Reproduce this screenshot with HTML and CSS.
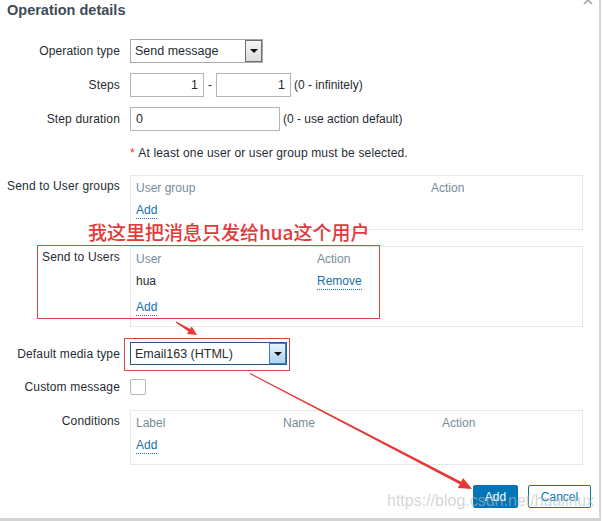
FILE: index.html
```html
<!DOCTYPE html>
<html>
<head>
<meta charset="utf-8">
<link rel="stylesheet" href="styles.css">
</head>
<body>
<div class="dialog">
  <h1 class="title">Operation details</h1>
  <span class="close"><svg width="10" height="10" viewBox="0 0 10 10"><path d="M1 1 L9 9 M9 1 L1 9" stroke="#aab4bb" stroke-width="2" fill="none"/></svg></span>

  <div class="form">
    <div class="row">
      <div class="lbl">Operation type</div>
      <div class="val">
        <div class="select sel-gray"><span class="sel-text">Send message</span><span class="sel-btn"><i class="tri"></i></span></div>
      </div>
    </div>

    <div class="row">
      <div class="lbl">Steps</div>
      <div class="val">
        <div class="input num w74">1</div>
        <span class="dash">-</span>
        <div class="input num w75">1</div>
        <span class="hint">(0 - infinitely)</span>
      </div>
    </div>

    <div class="row">
      <div class="lbl">Step duration</div>
      <div class="val">
        <div class="input w150">0</div>
        <span class="hint">(0 - use action default)</span>
      </div>
    </div>

    <div class="row note-row">
      <div class="lbl"></div>
      <div class="val"><span class="req">*</span>&nbsp;At least one user or user group must be selected.</div>
    </div>

    <div class="row top-row r-groups">
      <div class="lbl">Send to User groups</div>
      <div class="val">
        <div class="box tbl t-groups">
          <div class="th">User group</div><div class="th">Action</div>
          <div class="td"><span class="link">Add</span></div><div class="td"></div>
        </div>
      </div>
    </div>

    <div class="row top-row r-users">
      <div class="lbl">Send to Users</div>
      <div class="val">
        <div class="box tbl t-users">
          <div class="th">User</div><div class="th">Action</div>
          <div class="td">hua</div><div class="td"><span class="link">Remove</span></div>
          <div class="td"><span class="link">Add</span></div><div class="td"></div>
        </div>
      </div>
    </div>

    <div class="row r-media">
      <div class="lbl">Default media type</div>
      <div class="val">
        <div class="select sel-blue"><span class="sel-text">Email163 (HTML)</span><span class="sel-btn"><i class="tri"></i></span></div>
      </div>
    </div>

    <div class="row r-custom">
      <div class="lbl">Custom message</div>
      <div class="val"><span class="checkbox"></span></div>
    </div>

    <div class="row top-row r-cond">
      <div class="lbl">Conditions</div>
      <div class="val">
        <div class="box tbl t-cond">
          <div class="th">Label</div><div class="th">Name</div><div class="th">Action</div>
          <div class="td"><span class="link">Add</span></div><div class="td"></div><div class="td"></div>
        </div>
      </div>
    </div>

    <div class="buttons">
      <button class="btn btn-primary">Add</button>
      <button class="btn btn-alt">Cancel</button>
    </div>
  </div>

  <div class="anno-box anno-users"></div>
  <div class="anno-box anno-media"></div>
  <div class="anno-text">我这里把消息只发给hua这个用户</div>
  <svg class="anno-arrows" width="601" height="521" viewBox="0 0 601 521">
    <polygon fill="#e53935" points="176.26,321.57 190.14,328.99 191.72,326.44 197,335 186.98,334.1 188.56,331.55 175.74,322.43"/>
    <polygon fill="#e53935" points="250.23,373.06 461.16,481.67 463.01,478.12 472,489 457.93,487.88 459.78,484.33 249.77,373.94"/>
  </svg>
  <div class="watermark">https://blog.csdn.net/hualinux</div>
</div>
</body>
</html>
```

FILE: styles.css
```css
html, body {
  margin: 0;
  padding: 0;
  background: #ffffff;
}

body {
  font-family: "Liberation Sans", Arial, sans-serif;
  font-size: 12px;
  color: #1f2c33;
}

.dialog {
  position: relative;
  width: 599px;
  height: 518px;
  background: #ffffff;
  border-right: 2px solid #d6d6d6;
  border-bottom: 3px solid #d2d2d2;
  overflow: hidden;
}

.title {
  margin: 0;
  height: 29px;
  box-sizing: border-box;
  padding: 2px 0 0 7px;
  font-size: 14.5px;
  line-height: 17px;
  font-weight: bold;
  color: #3d4b57;
}

.close {
  position: absolute;
  right: 6px;
  top: -5px;
  width: 10px;
  height: 10px;
  display: block;
}
.close svg { display: block; }

.form {
  display: flex;
  flex-direction: column;
  gap: 10px;
  margin-top: 10px;
}

.row {
  display: flex;
  align-items: center;
  min-height: 24px;
}

.lbl {
  width: 130px;
  flex: none;
  box-sizing: border-box;
  padding-right: 10px;
  text-align: right;
  line-height: 14px;
  white-space: nowrap;
  letter-spacing: 0.15px;
}

.val {
  display: flex;
  align-items: center;
  line-height: 14px;
}

.top-row { align-items: flex-start; }
.top-row .lbl { padding-top: 4px; }

.note-row .val { line-height: 24px; letter-spacing: 0.15px; }
.req { color: #e33734; }

.r-groups { margin-bottom: 6px; }
.r-users { margin-bottom: 5px; }
.r-media { min-height: 23px; }
.r-cond { margin-top: 1px; }

/* select mocks */
.select {
  display: flex;
  box-sizing: border-box;
  background: #ffffff;
}
.sel-text {
  flex: 1;
  padding-left: 4px;
  white-space: nowrap;
  display: flex;
  align-items: center;
  font-size: 12.5px;
}
.sel-btn {
  width: 17px;
  flex: none;
  box-sizing: border-box;
  display: flex;
  align-items: center;
  justify-content: center;
}
.tri {
  display: block;
  width: 0;
  height: 0;
  border-left: 4px solid transparent;
  border-right: 4px solid transparent;
  border-top: 4px solid #111111;
}

.sel-gray {
  width: 133px;
  height: 24px;
  border: 1px solid #a9a9a9;
}
.sel-gray .sel-btn {
  border: 1px solid #6f6f6f;
  background: linear-gradient(#f6f6f6, #dcdcdc);
}

.sel-blue {
  width: 157px;
  height: 23px;
  border: 1px solid #23587f;
}
.sel-blue .sel-btn {
  border: 1px solid #3f82b5;
  background: linear-gradient(#e7f3fc, #acd3f1);
}

/* inputs */
.input {
  box-sizing: border-box;
  height: 24px;
  border: 1px solid #aeb6bb;
  padding: 0 5px;
  display: flex;
  align-items: center;
  font-size: 12.5px;
}
.num { justify-content: flex-end; }
.w74 { width: 74px; }
.w75 { width: 75px; }
.w150 { width: 150px; }
.dash { padding: 0 4px; }
.hint { padding-left: 3px; white-space: nowrap; }

.checkbox {
  display: block;
  width: 16px;
  height: 16px;
  box-sizing: border-box;
  border: 1px solid #acbbc2;
  border-radius: 2px;
  background: #ffffff;
}

/* tables */
.box {
  width: 453px;
  box-sizing: border-box;
  border: 1px solid #e5e9eb;
  padding: 0 5px 6px;
}
.tbl { display: grid; }
.t-groups { grid-template-columns: 295px 1fr; }
.t-users { grid-template-columns: 181px 1fr; }
.t-cond { grid-template-columns: 147px 159px 1fr; }

.th {
  height: 21px;
  box-sizing: border-box;
  padding-top: 5px;
  line-height: 14px;
  color: #768d99;
}
.td {
  height: 26px;
  box-sizing: border-box;
  padding-top: 6px;
  line-height: 14px;
}
.link {
  color: #1a70a8;
  border-bottom: 1px dotted #1a70a8;
  padding-bottom: 1px;
}

/* buttons */
.buttons {
  display: flex;
  justify-content: flex-end;
  gap: 10px;
  margin-top: 10px;
  padding-right: 8px;
}
.btn {
  height: 23px;
  box-sizing: border-box;
  font-family: "Liberation Sans", Arial, sans-serif;
  font-size: 12px;
  border-radius: 2px;
  border: 1px solid #0275b8;
  margin: 0;
}
.btn-primary {
  width: 45px;
  background: #0275b8;
  color: #ffffff;
}
.btn-alt {
  width: 63px;
  background: #ffffff;
  color: #0275b8;
}

/* annotations (overlays) */
.anno-box {
  position: absolute;
  border: 1px solid #d64545;
  box-sizing: border-box;
  pointer-events: none;
}
.anno-users {
  left: 37px;
  top: 245px;
  width: 343px;
  height: 74px;
}
.anno-media {
  left: 124px;
  top: 338px;
  width: 166px;
  height: 33px;
}
.anno-text {
  position: absolute;
  left: 88px;
  top: 222px;
  font-family: "Noto Sans CJK SC", "Liberation Sans", sans-serif;
  font-size: 19px;
  font-weight: 500;
  line-height: 20px;
  color: #e23a3a;
  white-space: nowrap;
}
.anno-arrows {
  position: absolute;
  left: 0;
  top: 0;
  pointer-events: none;
}
.watermark {
  position: absolute;
  left: 387px;
  top: 492px;
  font-family: "Liberation Sans", Arial, sans-serif;
  font-size: 16px;
  line-height: 18px;
  color: rgba(185, 185, 185, 0.6);
  white-space: nowrap;
  pointer-events: none;
}
```
